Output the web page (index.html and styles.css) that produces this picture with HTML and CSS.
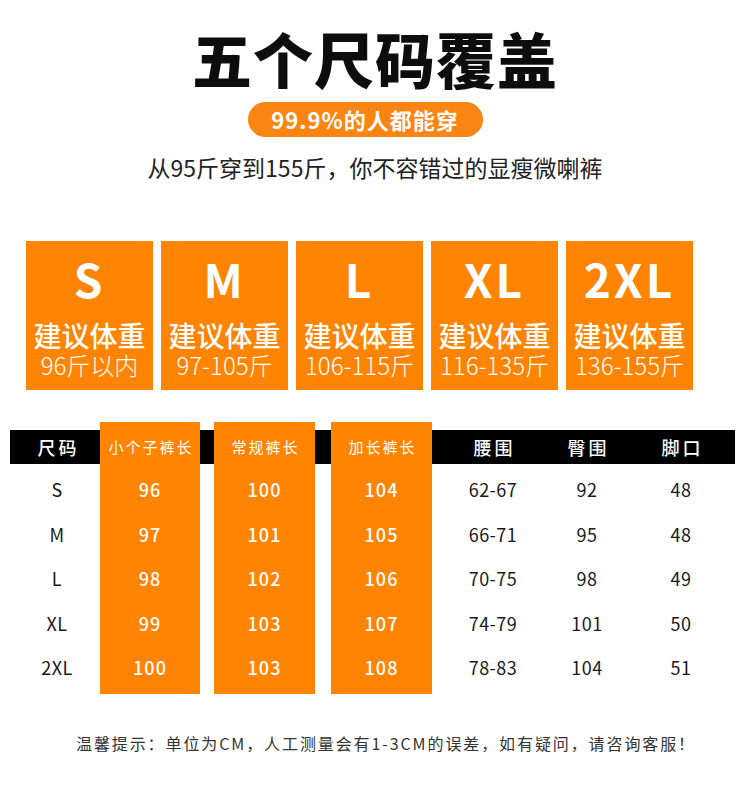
FILE: index.html
```html
<!DOCTYPE html>
<html lang="zh-CN">
<head>
<meta charset="utf-8">
<link rel="stylesheet" href="styles.css">
</head>
<body>
<div class="page">
  <h1 class="title">五个尺码覆盖</h1>
  <div class="pill">99.9%的人都能穿</div>
  <p class="subtitle">从95斤穿到155斤，你不容错过的显瘦微喇裤</p>

  <div class="cards">
    <div class="card"><div class="size">S</div><div class="label">建议体重</div><div class="range">96斤以内</div></div>
    <div class="card"><div class="size">M</div><div class="label">建议体重</div><div class="range">97-105斤</div></div>
    <div class="card"><div class="size">L</div><div class="label">建议体重</div><div class="range">106-115斤</div></div>
    <div class="card"><div class="size">XL</div><div class="label">建议体重</div><div class="range">116-135斤</div></div>
    <div class="card"><div class="size">2XL</div><div class="label">建议体重</div><div class="range">136-155斤</div></div>
  </div>

  <div class="table">
    <div class="col c-size">
      <div class="th th-big">尺码</div>
      <div class="td">S</div><div class="td">M</div><div class="td">L</div><div class="td">XL</div><div class="td">2XL</div>
    </div>
    <div class="col orange w100">
      <div class="th">小个子裤长</div>
      <div class="td">96</div><div class="td">97</div><div class="td">98</div><div class="td">99</div><div class="td">100</div>
    </div>
    <div class="col orange w101 ml14">
      <div class="th">常规裤长</div>
      <div class="td">100</div><div class="td">101</div><div class="td">102</div><div class="td">103</div><div class="td">103</div>
    </div>
    <div class="col orange w101 ml16">
      <div class="th">加长裤长</div>
      <div class="td">104</div><div class="td">105</div><div class="td">106</div><div class="td">107</div><div class="td">108</div>
    </div>
    <div class="col c-data ml14">
      <div class="th th-big">腰围</div>
      <div class="td">62-67</div><div class="td">66-71</div><div class="td">70-75</div><div class="td">74-79</div><div class="td">78-83</div>
    </div>
    <div class="col c-data">
      <div class="th th-big">臀围</div>
      <div class="td">92</div><div class="td">95</div><div class="td">98</div><div class="td">101</div><div class="td">104</div>
    </div>
    <div class="col c-data">
      <div class="th th-big">脚口</div>
      <div class="td">48</div><div class="td">48</div><div class="td">49</div><div class="td">50</div><div class="td">51</div>
    </div>
  </div>

  <p class="note">温馨提示：单位为CM，人工测量会有1-3CM的误差，如有疑问，请咨询客服！</p>
</div>
</body>
</html>
```

FILE: styles.css
```css
* { box-sizing: border-box; }
html, body { margin: 0; padding: 0; background: #fff; }
body {
  font-family: "Noto Sans CJK SC", "Noto Sans", sans-serif;
  color: #1a1a1a;
}
.page {
  width: 750px;
  display: flex;
  flex-direction: column;
  align-items: center;
}
.title {
  margin: 23px 0 0 0;
  font-size: 60px;
  line-height: 70px;
  font-weight: 900;
  color: #0d0d0d;
  letter-spacing: 1px;
}
.pill {
  margin-top: 9px;
  margin-right: 20px;
  width: 235px;
  height: 35px;
  border-radius: 18px;
  background: #fb8512;
  color: #fff;
  font-size: 22px;
  line-height: 35px;
  font-weight: 700;
  text-align: center;
  letter-spacing: 1px;
}
.subtitle {
  margin: 15px 0 0 0;
  font-size: 23px;
  line-height: 30px;
  color: #222;
}
.cards {
  margin-top: 59px;
  align-self: flex-start;
  margin-left: 26px;
  display: flex;
  gap: 8px;
}
.card {
  width: 127px;
  height: 149px;
  background: #fe8402;
  color: #fff;
  display: flex;
  flex-direction: column;
  align-items: center;
  padding-top: 12px;
}
.size {
  font-size: 46px;
  line-height: 50px;
  font-weight: 700;
  letter-spacing: 3px;
}
.label {
  margin-top: 19px;
  font-size: 28px;
  line-height: 26px;
  font-weight: 500;
}
.range {
  margin-top: 5px;
  font-size: 24px;
  line-height: 24px;
  font-weight: 300;
}
.table {
  margin-top: 32px;
  align-self: flex-start;
  margin-left: 10px;
  width: 725px;
  display: flex;
  background: linear-gradient(#000, #000) no-repeat;
  background-size: 100% 34px;
  background-position: 0 8px;
}
.col {
  display: flex;
  flex-direction: column;
  align-items: center;
  padding-top: 8px;
  padding-bottom: 4px;
}
.c-size { width: 90px; padding-left: 4px; }
.c-data { width: 94px; }
.w100 { width: 100px; }
.w101 { width: 101px; }
.ml14 { margin-left: 14px; }
.ml16 { margin-left: 16px; }
.orange { background: #fe8402; color: #fff; }
.th {
  height: 34px;
  line-height: 34px;
  margin-bottom: 3px;
  color: #fff;
  font-size: 15px;
  letter-spacing: 2px;
  font-weight: 400;
  padding-left: 2px;
}
.th-big {
  font-size: 18px;
  letter-spacing: 3px;
  padding-left: 3px;
  font-weight: 500;
}
.td {
  height: 44.5px;
  line-height: 44.5px;
  font-size: 18px;
  letter-spacing: 0.5px;
}
.orange .td { font-weight: 500; letter-spacing: 1px; }
.note {
  margin: 37px 0 0 22px;
  font-size: 16px;
  line-height: 24px;
  color: #333;
  letter-spacing: 1.9px;
}
```
